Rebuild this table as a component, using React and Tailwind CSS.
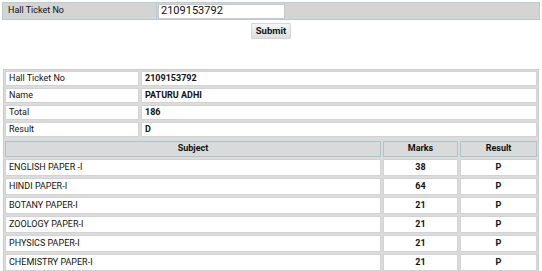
import React from "react";

const info = [
  ["Hall Ticket No", "2109153792"],
  ["Name", "PATURU ADHI"],
  ["Total", "186"],
  ["Result", "D"],
];

const subjects = [
  ["ENGLISH PAPER -I", "38", "P"],
  ["HINDI PAPER-I", "64", "P"],
  ["BOTANY PAPER-I", "21", "P"],
  ["ZOOLOGY PAPER-I", "21", "P"],
  ["PHYSICS PAPER-I", "21", "P"],
  ["CHEMISTRY PAPER-I", "21", "P"],
];

const App = () => {
  return (
    <div
      className="w-[542px] h-[271px] overflow-hidden bg-white text-[#111]"
      style={{ fontFamily: "Roboto, 'Liberation Sans', sans-serif" }}
    >
      {/* search form */}
      <div className="mx-[2px] mt-[2px] flex h-[18px] border border-[#b9cbd4] bg-[#d4d4d4]">
        <div className="flex w-[154px] items-center border-r border-[#b9cbd4] pl-[5px] text-[9px]">
          Hall Ticket No
        </div>
        <div className="flex items-center pl-[1px]">
          <input
            defaultValue="2109153792"
            className="h-[15px] w-[127px] border border-[#c9c9c9] bg-white px-[2px] text-[11px] outline-none"
          />
        </div>
      </div>
      <div className="mt-[3px] flex justify-center">
        <button className="h-[16px] rounded-[1px] border border-[#d6d6d6] bg-gradient-to-b from-[#f6f6f6] to-[#dedede] px-[4px] text-[9.5px] font-bold">
          Submit
        </button>
      </div>

      {/* result table */}
      <div className="mx-[3px] mt-[30px] border border-[#cbcbcb] bg-[#dcdcdc] p-[1px]">
        <div className="flex flex-col gap-[2px]">
          {info.map(([k, v]) => (
            <div key={k} className="flex h-[15px] gap-[2px] text-[9px]">
              <div className="flex w-[134px] items-center border border-[#d2d2d2] bg-white pl-[3px]">
                {k}
              </div>
              <div className="flex flex-1 items-center border border-[#d2d2d2] bg-white pl-[3px] font-bold">
                {v}
              </div>
            </div>
          ))}
          <div className="mt-[2px] flex h-[16px] gap-[2px] text-[9px] font-bold">
            <div className="flex flex-1 items-center justify-center border border-[#a9c4cc] bg-[#d9dbdb]">
              Subject
            </div>
            <div className="flex w-[75px] items-center justify-center border border-[#a9c4cc] bg-[#d9dbdb]">
              Marks
            </div>
            <div className="flex w-[77px] items-center justify-center border border-[#a9c4cc] bg-[#d9dbdb]">
              Result
            </div>
          </div>
          {subjects.map(([s, m, r]) => (
            <div key={s} className="flex h-[17px] gap-[2px] text-[9px]">
              <div className="flex flex-1 items-center border border-[#d2d2d2] bg-white pl-[3px]">
                {s}
              </div>
              <div className="flex w-[75px] items-center justify-center border border-[#d2d2d2] bg-white font-bold">
                {m}
              </div>
              <div className="flex w-[77px] items-center justify-center border border-[#d2d2d2] bg-white font-bold">
                {r}
              </div>
            </div>
          ))}
        </div>
      </div>
    </div>
  );
};

export default App;
